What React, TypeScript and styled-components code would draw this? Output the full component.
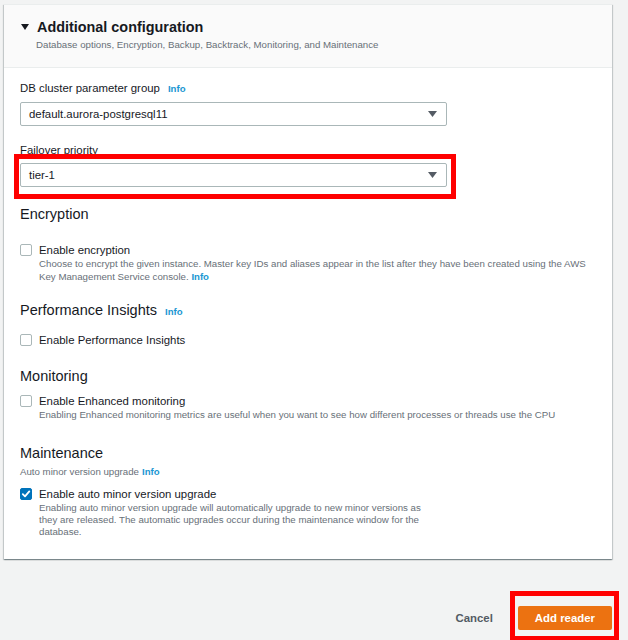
import React from "react";
import styled, { createGlobalStyle } from "styled-components";

const GlobalStyle = createGlobalStyle`
  html, body { margin: 0; padding: 0; background: #f2f3f3; }
  body {
    font-family: "Liberation Sans", Arial, sans-serif;
    color: #16191f;
    -webkit-font-smoothing: antialiased;
  }
`;

const Page = styled.div`
  width: 628px;
  height: 640px;
  box-sizing: border-box;
  padding: 4px 16px 0 4px;
  overflow: hidden;
`;

const Card = styled.section`
  background: #ffffff;
  border-top: 1px solid #eaeded;
  box-shadow: 0 1px 1px 0 rgba(0, 28, 36, 0.3), 1px 1px 1px 0 rgba(0, 28, 36, 0.15),
    -1px 1px 1px 0 rgba(0, 28, 36, 0.15);
`;

const CardHeader = styled.header`
  background: #fafafa;
  border-bottom: 1px solid #eaeded;
  padding: 13px 16px 15px 17px;
`;

const TitleRow = styled.div`
  display: flex;
  align-items: center;
  gap: 8px;
  height: 18px;
`;

const Title = styled.h2`
  margin: 0;
  font-size: 14.4px;
  line-height: 18px;
  font-weight: 700;
  color: #16191f;
`;

const Subtitle = styled.div`
  margin: 2px 0 0 15px;
  font-size: 9.7px;
  line-height: 14px;
  color: #687078;
`;

const CardBody = styled.div`
  padding: 12px 16px 21.5px 16px;
`;

const Field = styled.div<{ $mt?: number }>`
  margin-top: ${(p) => p.$mt ?? 0}px;
`;

const Label = styled.div`
  display: flex;
  align-items: baseline;
  gap: 8px;
  font-size: 11.4px;
  line-height: 16px;
  color: #16191f;
  margin-bottom: 5px;
`;

const InfoLink = styled.a`
  font-size: 9.6px;
  font-weight: 700;
  color: #1a97d2;
  text-decoration: none;
`;

const Anchor = styled.div`
  position: relative;
  width: 427px;
`;

const SelectBox = styled.div`
  box-sizing: border-box;
  width: 427px;
  height: 24px;
  border: 1px solid #aab7b8;
  border-radius: 2px;
  background: #ffffff;
  display: flex;
  align-items: center;
  justify-content: space-between;
  padding: 0 9px 0 8px;
  font-size: 11.4px;
  color: #16191f;
`;

const Highlight = styled.span<{ $t: number; $r: number; $b: number; $l: number }>`
  position: absolute;
  top: ${(p) => -p.$t}px;
  right: ${(p) => -p.$r}px;
  bottom: ${(p) => -p.$b}px;
  left: ${(p) => -p.$l}px;
  border: 5px solid #ff0000;
  pointer-events: none;
`;

const SectionHeading = styled.h3<{ $mt: number }>`
  margin: ${(p) => p.$mt}px 0 0 0;
  display: flex;
  align-items: baseline;
  gap: 8px;
  font-size: 14.5px;
  line-height: 20px;
  font-weight: 400;
  color: #16191f;
`;

const SubNote = styled.div<{ $mt: number }>`
  margin-top: ${(p) => p.$mt}px;
  display: flex;
  align-items: baseline;
  gap: 3px;
  font-size: 9.7px;
  line-height: 13px;
  color: #687078;
`;

const CheckRow = styled.div<{ $mt: number }>`
  margin-top: ${(p) => p.$mt}px;
  display: flex;
  align-items: flex-start;
  gap: 7px;
`;

const Box = styled.span<{ $checked?: boolean }>`
  flex: none;
  box-sizing: border-box;
  width: 12px;
  height: 12px;
  margin-top: 1px;
  border-radius: 2px;
  border: 1px solid ${(p) => (p.$checked ? "#0073bb" : "#aab7b8")};
  background: ${(p) => (p.$checked ? "#0073bb" : "#ffffff")};
  display: flex;
  align-items: center;
  justify-content: center;
`;

const CheckText = styled.div`
  display: flex;
  flex-direction: column;
`;

const CheckLabel = styled.div`
  font-size: 11.4px;
  line-height: 14px;
  color: #16191f;
`;

const CheckDesc = styled.div<{ $max?: number; $lh?: number; $pt?: number }>`
  font-size: 9.7px;
  line-height: ${(p) => p.$lh ?? 13}px;
  padding-top: ${(p) => p.$pt ?? 0}px;
  color: #687078;
  max-width: ${(p) => (p.$max ? `${p.$max}px` : "none")};
`;

const Footer = styled.footer`
  margin-top: 47px;
  display: flex;
  justify-content: flex-end;
  align-items: center;
  gap: 25px;
`;

const CancelButton = styled.button`
  border: none;
  background: transparent;
  padding: 0;
  font-family: inherit;
  font-size: 11.4px;
  font-weight: 700;
  color: #545b64;
  line-height: 24px;
  white-space: nowrap;
`;

const PrimaryButton = styled.button`
  border: none;
  border-radius: 2px;
  background: #ec7211;
  color: #ffffff;
  font-family: inherit;
  font-size: 11.4px;
  font-weight: 700;
  height: 24px;
  padding: 0 17px;
  white-space: nowrap;
`;

const ButtonAnchor = styled.div`
  position: relative;
  display: flex;
`;

const Caret = () => (
  <svg width="8" height="6" viewBox="0 0 8 6" aria-hidden="true">
    <path d="M0 0 H8 L4 6 Z" fill="#16191f" />
  </svg>
);

const SelectArrow = () => (
  <svg width="9" height="6" viewBox="0 0 9 6" aria-hidden="true">
    <path d="M0 0 H9 L4.5 6 Z" fill="#545b64" />
  </svg>
);

const Check = () => (
  <svg width="10" height="10" viewBox="0 0 10 10" aria-hidden="true">
    <path d="M1.8 5.2 L4 7.4 L8.3 2.4" fill="none" stroke="#ffffff" strokeWidth="1.8" strokeLinecap="round" strokeLinejoin="round" />
  </svg>
);

export default function App() {
  return (
    <>
      <GlobalStyle />
      <Page>
        <Card>
          <CardHeader>
            <TitleRow>
              <Caret />
              <Title>Additional configuration</Title>
            </TitleRow>
            <Subtitle>
              Database options, Encryption, Backup, Backtrack, Monitoring, and Maintenance
            </Subtitle>
          </CardHeader>
          <CardBody>
            <Field>
              <Label>
                DB cluster parameter group <InfoLink>Info</InfoLink>
              </Label>
              <SelectBox>
                <span>default.aurora-postgresql11</span>
                <SelectArrow />
              </SelectBox>
            </Field>
            <Field $mt={16}>
              <Label>Failover priority</Label>
              <Anchor>
                <SelectBox>
                  <span>tier-1</span>
                  <SelectArrow />
                </SelectBox>
                <Highlight $t={9} $r={9} $b={12} $l={6} />
              </Anchor>
            </Field>

            <SectionHeading $mt={17}>Encryption</SectionHeading>
            <CheckRow $mt={19}>
              <Box />
              <CheckText>
                <CheckLabel>Enable encryption</CheckLabel>
                <CheckDesc>
                  Choose to encrypt the given instance. Master key IDs and aliases appear in the list after they
                  have been created using the AWS Key Management Service console. <InfoLink>Info</InfoLink>
                </CheckDesc>
              </CheckText>
            </CheckRow>

            <SectionHeading $mt={16.5}>
              Performance Insights <InfoLink>Info</InfoLink>
            </SectionHeading>
            <CheckRow $mt={11.5}>
              <Box />
              <CheckText>
                <CheckLabel>Enable Performance Insights</CheckLabel>
              </CheckText>
            </CheckRow>

            <SectionHeading $mt={19}>Monitoring</SectionHeading>
            <CheckRow $mt={8}>
              <Box />
              <CheckText>
                <CheckLabel>Enable Enhanced monitoring</CheckLabel>
                <CheckDesc>
                  Enabling Enhanced monitoring metrics are useful when you want to see how different processes or
                  threads use the CPU
                </CheckDesc>
              </CheckText>
            </CheckRow>

            <SectionHeading $mt={21.5}>Maintenance</SectionHeading>
            <SubNote $mt={2}>
              Auto minor version upgrade <InfoLink>Info</InfoLink>
            </SubNote>
            <CheckRow $mt={9}>
              <Box $checked>
                <Check />
              </Box>
              <CheckText>
                <CheckLabel>Enable auto minor version upgrade</CheckLabel>
                <CheckDesc $max={395} $lh={12} $pt={1}>
                  Enabling auto minor version upgrade will automatically upgrade to new minor versions as they are
                  released. The automatic upgrades occur during the maintenance window for the database.
                </CheckDesc>
              </CheckText>
            </CheckRow>
          </CardBody>
        </Card>
        <Footer>
          <CancelButton>Cancel</CancelButton>
          <ButtonAnchor>
            <PrimaryButton>Add reader</PrimaryButton>
            <Highlight $t={15} $r={7} $b={11} $l={8} />
          </ButtonAnchor>
        </Footer>
      </Page>
    </>
  );
}
